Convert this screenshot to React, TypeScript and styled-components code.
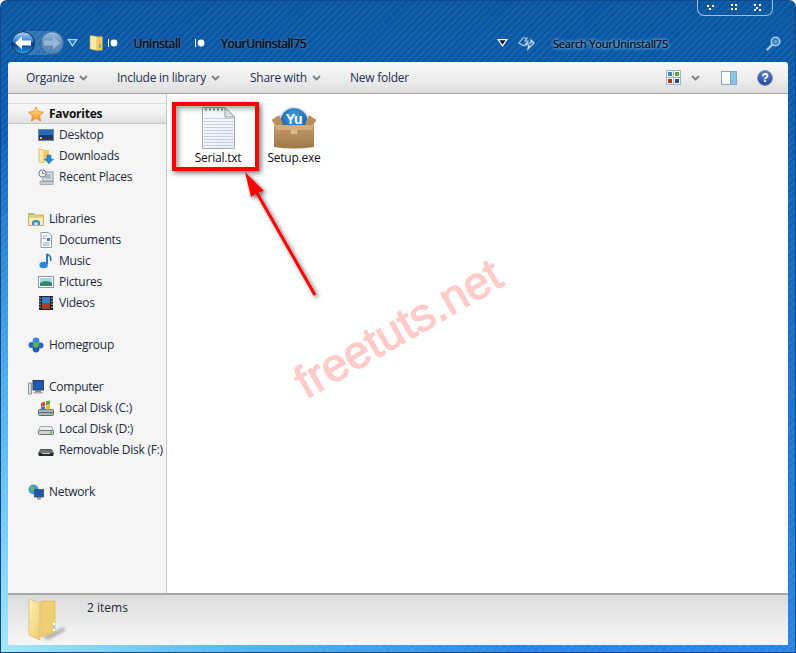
import styled, { createGlobalStyle } from 'styled-components';
import type { ReactNode } from 'react';

const GlobalStyle = createGlobalStyle`
  html, body {
    margin: 0;
    padding: 0;
    background: #fff;
  }
  body {
    font-family: "Open Sans", "Noto Sans", "Liberation Sans", sans-serif;
    font-size: 12px;
    letter-spacing: -0.25px;
    color: #1e2a3c;
  }
`;

const Window = styled.div`
  position: relative;
  width: 796px;
  height: 653px;
  box-sizing: border-box;
  display: flex;
  flex-direction: column;
  padding: 0 8px 8px;
  overflow: hidden;
  border-radius: 7px 7px 0 0;
  box-shadow: inset 0 0 0 1px #0c4a8c;
  background:
    repeating-linear-gradient(135deg, rgba(255, 255, 255, 0.06) 0 2px, rgba(255, 255, 255, 0) 2px 5px),
    radial-gradient(circle at 0% 100%, #a2e8fa 0, #58b8f0 220px, rgba(42, 132, 230, 0) 520px),
    linear-gradient(180deg, #09559f 0, #0a5cb0 110px, #2a84e4 100%);
`;

const WindowControls = styled.div`
  position: absolute;
  top: 0;
  right: 23px;
  width: 76px;
  height: 16px;
  box-sizing: border-box;
  display: flex;
  align-items: center;
  justify-content: space-between;
  padding: 0 11px 1px 9px;
  border: 1px solid #9cc0e2;
  border-top: 0;
  border-radius: 0 0 7px 7px;
`;

const TitleArea = styled.div`
  height: 62px;
  box-sizing: border-box;
  padding-top: 31px;
  display: flex;
  align-items: flex-start;
`;

const NavCluster = styled.div`
  display: flex;
  align-items: center;
  height: 24px;
  margin-left: 3px;
  gap: 3px;
`;

const ButtonPair = styled.div`
  display: flex;
  gap: 5px;
  border-radius: 12px;
  background: rgba(120, 170, 215, 0.35);
`;

const Crumbs = styled.div`
  display: flex;
  align-items: center;
  height: 24px;
  margin-left: 11px;
`;

const CrumbSpacer = styled.span`
  width: 5px;
`;

const CrumbText = styled.span`
  color: #000c1e;
  font-size: 12px;
  text-shadow: 0 0 1px #000c1e, 0 0 3px #4f7ca8, 0 0 3px #4f7ca8, 0 0 2px #4f7ca8;
  margin: 0 15px 0 15.5px;
`;

const SearchCluster = styled.div`
  display: flex;
  align-items: center;
  height: 24px;
  margin-left: auto;
  width: 291px;
`;

const RefreshSlot = styled.span`
  display: flex;
  margin-left: 10px;
`;

const SearchLabel = styled.span`
  color: #000c1e;
  font-size: 11px;
  letter-spacing: -0.2px;
  margin-left: 18px;
  text-shadow: 0 0 1px #000c1e, 0 0 4px #8fc4ec, 0 0 3px #8fc4ec, 0 0 2px #8fc4ec;
`;

const SearchGlass = styled.span`
  display: flex;
  margin-left: auto;
  margin-right: 7px;
`;

const Toolbar = styled.div`
  height: 32px;
  box-sizing: border-box;
  flex: none;
  display: flex;
  align-items: center;
  padding-left: 18px;
  border-radius: 3px 3px 0 0;
  border-bottom: 1px solid #a4a4a4;
  background: linear-gradient(180deg, #f8f8f8 0, #f1f1f1 40%, #dedede 100%);
`;

const ToolButton = styled.div<{ $width: number }>`
  width: ${(p) => p.$width}px;
  display: flex;
  align-items: center;
  gap: 5px;
  color: #1e3050;
`;

const ToolIcons = styled.div`
  margin-left: auto;
  margin-right: 15px;
  display: flex;
  align-items: center;
`;

const ToolIconSlot = styled.span<{ $gap: number }>`
  display: flex;
  margin-left: ${(p) => p.$gap}px;
`;

const Body = styled.div`
  flex: 1;
  min-height: 0;
  display: flex;
`;

const NavPane = styled.nav`
  width: 159px;
  box-sizing: border-box;
  flex: none;
  padding-top: 9px;
  background: #f5f5f5;
  border-right: 1px solid #c6c6c6;
`;

const NavGroup = styled.div`
  margin-bottom: 21px;
`;

const NavRow = styled.div<{ $child?: boolean; $active?: boolean }>`
  height: 21px;
  display: flex;
  align-items: center;
  gap: 5px;
  white-space: nowrap;
  padding-left: ${(p) => (p.$child ? 30 : 20)}px;
  font-weight: ${(p) => (p.$active ? 700 : 400)};
  color: ${(p) => (p.$active ? '#101010' : '#1e2a3c')};
  ${(p) =>
    p.$active &&
    `background: linear-gradient(180deg, #f8f8f8 0, #f0f0f0 50%, #e0e0e0 100%);
     border-top: 1px solid #dcdcdc;
     border-bottom: 1px solid #c8c8c8;
     height: 19px;`}
`;

const Main = styled.main`
  flex: 1;
  background: #fff;
  display: flex;
  align-items: flex-start;
  padding: 13px 0 0 13px;
`;

const FileTile = styled.div`
  width: 76px;
  display: flex;
  flex-direction: column;
  align-items: center;
  line-height: 16px;
  color: #101010;
`;

const StatusBar = styled.footer`
  height: 52px;
  box-sizing: border-box;
  flex: none;
  display: flex;
  align-items: flex-start;
  gap: 21px;
  padding: 2px 0 0 20px;
  border-top: 2px solid #a8a8a8;
  background: linear-gradient(180deg, #dcdcdc 0, #f0f0f0 70%, #f6f6f6 100%);
`;

const StatusText = styled.span`
  font-size: 12px;
  line-height: 18px;
  letter-spacing: 0;
  margin-top: 2px;
  color: #1e2a3c;
`;

const HighlightBox = styled.div`
  position: absolute;
  left: 172px;
  top: 102px;
  width: 87px;
  height: 69px;
  box-sizing: border-box;
  border: 4px solid #fe0000;
  box-shadow: 2px 2px 5px rgba(0, 0, 0, 0.55), inset 3px 3px 5px rgba(0, 0, 0, 0.35);
`;

const ArrowLayer = styled.svg`
  position: absolute;
  left: 236px;
  top: 165px;
  overflow: visible;
`;

const Watermark = styled.div`
  position: absolute;
  left: 278px;
  top: 298px;
  width: 240px;
  text-align: center;
  color: #ffcbcb;
  -webkit-text-stroke: 1.2px #ffcbcb;
  font-family: "Liberation Sans", sans-serif;
  font-size: 46px;
  letter-spacing: 0;
  line-height: 60px;
  transform: rotate(-30deg);
  white-space: nowrap;
`;

const Svg = ({ size = 16, h, children }: { size?: number; h?: number; children: ReactNode }) => (
  <svg width={size} height={h ?? size} viewBox={`0 0 ${size} ${h ?? size}`} style={{ flex: 'none', display: 'block' }}>
    {children}
  </svg>
);

const Caret = ({ color = '#7c7c7c' }: { color?: string }) => (
  <Svg size={9} h={6}>
    <path d="M1 1 L4.5 4.5 L8 1" fill="none" stroke={color} strokeWidth="1.8" />
  </Svg>
);

const TriangleDown = ({ outer, inner }: { outer: string; inner: string }) => (
  <Svg size={11} h={8}>
    <path d="M0 0 H11 L5.5 8 Z" fill={outer} />
    <path d="M2.4 1.3 H8.6 L5.5 5.8 Z" fill={inner} />
  </Svg>
);

const CrumbDot = () => (
  <Svg size={10} h={10}>
    <rect x="0" y="1" width="1" height="8" fill="#fff" />
    <circle cx="6" cy="5" r="3.4" fill="#fff" />
  </Svg>
);

const NavButton = ({ active, id }: { active?: boolean; id: string }) => (
  <Svg size={24} h={24}>
    <defs>
      <linearGradient id={id} x1="0" y1="0" x2="0" y2="1">
        {active ? (
          <>
            <stop offset="0" stopColor="#a8d4f8" />
            <stop offset="0.46" stopColor="#2c78d0" />
            <stop offset="0.52" stopColor="#06358c" />
            <stop offset="1" stopColor="#1fa8ec" />
          </>
        ) : (
          <>
            <stop offset="0" stopColor="#9cc0e0" />
            <stop offset="0.5" stopColor="#5f90c0" />
            <stop offset="1" stopColor="#4f86bc" />
          </>
        )}
      </linearGradient>
    </defs>
    <circle cx="12" cy="12" r="11.3" fill={`url(#${id})`} stroke={active ? '#0c2444' : '#3c5f88'} strokeWidth="1" />
    {active ? (
      <path d="M4 12 L11 5.5 V9.5 H20 V14.5 H11 V18.5 Z" fill="#fff" />
    ) : (
      <path d="M20 12 L13 5.5 V9.5 H4 V14.5 H13 V18.5 Z" fill="#9ab8d6" />
    )}
  </Svg>
);

const FolderPlain = () => (
  <Svg size={14} h={16}>
    <path d="M1 0.5 L8 1.5 V15.5 L1 14 Z" fill="#fbe9a8" stroke="#c8a850" strokeWidth="0.6" />
    <path d="M8 1.5 H13.5 V15.5 H8 Z" fill="#f0c860" />
    <path d="M11 9 V13" stroke="#3a90d8" strokeWidth="1" />
  </Svg>
);

const RefreshIcon = () => (
  <Svg size={17} h={15}>
    <path d="M1 7 L5 2 H9 L7 5 H10 L6 10 Z" fill="none" stroke="#a8cce8" strokeWidth="1.2" />
    <path d="M8 9 H11 L10 13 L16 7 L13 4 L13 7 H9 Z" fill="none" stroke="#c8e0f2" strokeWidth="1.2" />
  </Svg>
);

const SearchIcon = () => (
  <Svg size={15} h={15}>
    <circle cx="9.5" cy="5.5" r="4.2" fill="#3a7fc0" stroke="#a8d0ee" strokeWidth="1.6" />
    <circle cx="9.5" cy="5.5" r="1.6" fill="#6aa8d8" />
    <path d="M6.3 8.7 L1.5 13.5" stroke="#a8d0ee" strokeWidth="2.2" strokeLinecap="round" />
  </Svg>
);

const WinGlyph = ({ points }: { points: [number, number][] }) => (
  <Svg size={7} h={7}>
    {points.map(([x, y]) => (
      <rect key={`${x}-${y}`} x={x} y={y} width="2" height="2" fill="#fff" />
    ))}
  </Svg>
);

const ViewsIcon = () => (
  <Svg size={15} h={15}>
    <rect x="0.5" y="0.5" width="14" height="14" fill="#fff" stroke="#9cb4cc" />
    <path d="M7.5 0.5 V14.5 M0.5 7.5 H14.5" stroke="#9cb4cc" />
    <rect x="2" y="2" width="4" height="4" fill="#3c88c0" />
    <rect x="9" y="2" width="4" height="4" fill="#5aa838" />
    <rect x="2" y="9" width="4" height="4" fill="#b83018" />
    <rect x="9" y="9" width="4" height="4" fill="#2c4c80" />
  </Svg>
);

const PreviewIcon = () => (
  <Svg size={16} h={14}>
    <rect x="0.5" y="0.5" width="15" height="13" fill="#fff" stroke="#88a4c0" />
    <rect x="10" y="1" width="5" height="12" fill="#88c4e4" />
    <path d="M9.5 1 V13" stroke="#88a4c0" />
  </Svg>
);

const HelpIcon = () => (
  <Svg size={16} h={16}>
    <defs>
      <radialGradient id="helpFill" cx="0.5" cy="0.3" r="0.7">
        <stop offset="0" stopColor="#6c94d8" />
        <stop offset="1" stopColor="#1c3c98" />
      </radialGradient>
    </defs>
    <circle cx="8" cy="8" r="7.4" fill="url(#helpFill)" stroke="#7c8ca8" strokeWidth="1" />
    <text x="8" y="12.3" textAnchor="middle" fontFamily="Liberation Sans" fontWeight="700" fontSize="12" fill="#fff">
      ?
    </text>
  </Svg>
);

const StarIcon = () => (
  <Svg size={16} h={16}>
    <defs>
      <linearGradient id="starFill" x1="0" y1="0" x2="0" y2="1">
        <stop offset="0" stopColor="#fff0a0" />
        <stop offset="1" stopColor="#f59020" />
      </linearGradient>
    </defs>
    <path
      d="M8 0.8 L10.2 5.6 L15.4 6.2 L11.5 9.7 L12.6 15 L8 12.3 L3.4 15 L4.5 9.7 L0.6 6.2 L5.8 5.6 Z"
      fill="url(#starFill)"
      stroke="#e88820"
      strokeWidth="0.8"
    />
  </Svg>
);

const DesktopIcon = () => (
  <Svg>
    <rect x="0.5" y="2.5" width="15" height="11" fill="#16386c" stroke="#7088a8" />
    <rect x="1" y="3" width="14" height="5" fill="#2468b8" />
    <rect x="1" y="11" width="14" height="2" fill="#303c4c" />
    <rect x="2" y="10" width="2" height="2" fill="#e8c048" />
  </Svg>
);

const DownloadsIcon = () => (
  <Svg>
    <path d="M1 1 L6 2 V15 L1 14 Z" fill="#fbe9a8" stroke="#c8a850" strokeWidth="0.6" />
    <path d="M6 2 H11 V13 H6 Z" fill="#f0c860" />
    <path d="M9 7 H13 V11 H15.5 L11 15.8 L6.5 11 H9 Z" fill="#2a88d8" stroke="#1c60a8" strokeWidth="0.5" />
  </Svg>
);

const RecentIcon = () => (
  <Svg>
    <rect x="5" y="3" width="10" height="9" fill="#e0e4e8" stroke="#8c949c" />
    <rect x="7" y="5" width="6" height="5" fill="#a8b8c4" />
    <rect x="2" y="12.5" width="13" height="3" fill="#c8ccd0" stroke="#888" strokeWidth="0.6" />
    <circle cx="4.5" cy="4.5" r="3.6" fill="#f0f0f0" stroke="#70787c" />
    <path d="M4.5 2.5 V4.5 H6.5" stroke="#505860" fill="none" strokeWidth="0.8" />
  </Svg>
);

const LibrariesIcon = () => (
  <Svg>
    <path d="M0.5 2.5 H6 L7.5 4 H15.5 V14.5 H0.5 Z" fill="#e8d080" stroke="#b89c48" strokeWidth="0.7" />
    <rect x="1" y="2" width="5" height="2" fill="#9cc868" />
    <path d="M1 7 H15 V14 H1 Z" fill="#fcefb8" />
    <path d="M4 14 V10.5 Q8 7 12 10.5 V14 H9.5 V11.5 H6.5 V14 Z" fill="#3c94d0" />
  </Svg>
);

const DocumentsIcon = () => (
  <Svg>
    <path d="M3 0.5 H10.5 L13.5 3.5 V15.5 H3 Z" fill="#fff" stroke="#8c9cb0" />
    <path d="M5 4 H9 M5 6.5 H8 M5 11 H11.5 M5 13 H11.5" stroke="#8ca4c0" />
    <rect x="9" y="6" width="3" height="3" fill="#3c80b8" />
  </Svg>
);

const MusicIcon = () => (
  <Svg>
    <path d="M9 1 V11" stroke="#2a78c8" strokeWidth="2" />
    <path d="M9 1 Q14 3 12.5 8" fill="none" stroke="#2a78c8" strokeWidth="1.6" />
    <ellipse cx="5.6" cy="12" rx="4.2" ry="3.2" fill="#2a88d8" />
  </Svg>
);

const PicturesIcon = () => (
  <Svg>
    <rect x="0.5" y="2.5" width="15" height="11" fill="#fff" stroke="#8c98a4" />
    <rect x="2" y="4" width="12" height="5" fill="#a8d4e8" />
    <path d="M2 9 Q8 5 14 9 V12 H2 Z" fill="#2c8c60" />
  </Svg>
);

const VideosIcon = () => (
  <Svg>
    <rect x="1" y="1" width="14" height="14" fill="#20242a" />
    <rect x="4" y="2" width="8" height="12" fill="#2a88c8" />
    <path d="M4 8 H12 V14 H4 Z" fill="#a84028" />
    <path d="M2 2.5 V13.5 M14 2.5 V13.5" stroke="#dde" strokeWidth="1" strokeDasharray="1.5 1.5" />
  </Svg>
);

const HomegroupIcon = () => (
  <Svg>
    <circle cx="3.5" cy="8" r="3" fill="#2a68c0" />
    <circle cx="12.5" cy="8.5" r="3" fill="#2a68c0" />
    <circle cx="8" cy="4" r="3.4" fill="#3c88d8" />
    <circle cx="8" cy="12" r="3.4" fill="#2458a8" />
    <circle cx="8" cy="8" r="2.8" fill="#58b848" />
  </Svg>
);

const ComputerIcon = () => (
  <Svg>
    <rect x="0.5" y="4" width="3" height="11" fill="#d8dcdc" stroke="#6c7478" strokeWidth="0.7" />
    <rect x="5" y="1.5" width="10.5" height="9.5" fill="#1c58b8" stroke="#303c50" />
    <rect x="7" y="11" width="6" height="2" fill="#80888c" />
    <rect x="5.5" y="13" width="9" height="1.5" fill="#a8b0b4" />
  </Svg>
);

const DiskCIcon = () => (
  <Svg>
    <rect x="0.5" y="9.5" width="15" height="6" rx="1" fill="#a8b8b8" stroke="#606c70" />
    <path d="M1 12.5 H15" stroke="#5c6c70" />
    <rect x="12" y="13.5" width="2" height="1" fill="#48d040" />
    <path d="M3 3 L7 1.5 V5.5 L3 7 Z" fill="#d84828" />
    <path d="M8 1.2 L12 0.5 V4.5 L8 5.2 Z" fill="#58a838" />
    <path d="M3 7.5 L7 6 V9.5 L3 9.5 Z" fill="#2878c8" />
    <path d="M8 5.8 L12 5 V9.5 H8 Z" fill="#f0b820" />
  </Svg>
);

const DiskDIcon = () => (
  <Svg>
    <path d="M2.5 5.5 H13.5 L15.5 9.5 H0.5 Z" fill="#eceeee" stroke="#8c9498" strokeWidth="0.8" />
    <rect x="0.5" y="9.5" width="15" height="4" rx="1" fill="#d0d4d4" stroke="#6c7478" />
    <rect x="12" y="10.5" width="2" height="2" fill="#58c848" />
  </Svg>
);

const DiskFIcon = () => (
  <Svg>
    <path d="M2.5 7.5 H13.5 L15.5 11.5 H0.5 Z" fill="#70767a" stroke="#404448" strokeWidth="0.8" />
    <rect x="0.5" y="11" width="15" height="3" rx="1" fill="#282a2e" />
    <rect x="4" y="11" width="8" height="1" fill="#c8cccc" />
  </Svg>
);

const NetworkIcon = () => (
  <Svg>
    <circle cx="5.5" cy="5.5" r="5" fill="#3ca0d8" />
    <path d="M2 3 Q5 1 6 3 T4 8 Z" fill="#68b848" />
    <rect x="6.5" y="5.5" width="9" height="7.5" fill="#1c58b0" stroke="#404c60" strokeWidth="0.8" />
    <rect x="9" y="13" width="4" height="2.5" fill="#8c9498" />
  </Svg>
);

const TextFileIcon = () => {
  const lines = [];
  for (let y = 11; y < 39; y += 3) {
    lines.push(<path key={y} d={`M2 ${y + 0.5} H31`} stroke="#c4d0e4" />);
  }
  return (
    <Svg size={33} h={43}>
      <defs>
        <linearGradient id="paperFill" x1="0" y1="0" x2="1" y2="1">
          <stop offset="0" stopColor="#fbfcfe" />
          <stop offset="1" stopColor="#e8ecf4" />
        </linearGradient>
      </defs>
      <path d="M0.5 0.5 H23 L32.5 10 V41.5 H0.5 Z" fill="url(#paperFill)" stroke="#a8a8a8" />
      {lines}
      <path d="M23 0.5 V10 H32.5 Z" fill="#e0e4ea" stroke="#a0a0a0" />
      <path d="M3 2.5 H21" stroke="#909090" strokeWidth="2" strokeDasharray="2 2" />
    </Svg>
  );
};

const SetupBoxIcon = () => (
  <Svg size={46} h={43}>
    <defs>
      <linearGradient id="boxFill" x1="0" y1="0" x2="0" y2="1">
        <stop offset="0" stopColor="#c49a68" />
        <stop offset="1" stopColor="#a07848" />
      </linearGradient>
      <radialGradient id="orbFill" cx="0.5" cy="0.3" r="0.7">
        <stop offset="0" stopColor="#48a0e0" />
        <stop offset="1" stopColor="#0c4c98" />
      </radialGradient>
    </defs>
    <circle cx="23" cy="15" r="14.5" fill="url(#orbFill)" stroke="#d8dee4" strokeWidth="1.6" />
    <text x="23" y="17" textAnchor="middle" fontFamily="Liberation Sans" fontWeight="700" fontSize="14" fill="#fff">
      Yu
    </text>
    <path d="M0.5 13 L8 8 L12 17 L6 21 Z" fill="#b89060" />
    <path d="M45.5 13 L38 8 L34 17 L40 21 Z" fill="#b89060" />
    <path d="M3 18 H43 V40 Q23 43 3 40 Z" fill="url(#boxFill)" />
    <path d="M3 18 H43 L40 23 H6 Z" fill="#d4ac7c" />
    <path d="M20 23 H26 V27 H20 Z" fill="#d8bc94" />
  </Svg>
);

const BigFolderIcon = () => (
  <Svg size={38} h={44}>
    <defs>
      <linearGradient id="bigFolder" x1="0" y1="0" x2="1" y2="1">
        <stop offset="0" stopColor="#fff2b8" />
        <stop offset="1" stopColor="#f0cc68" />
      </linearGradient>
      <filter id="folderShade">
        <feGaussianBlur stdDeviation="1.6" />
      </filter>
    </defs>
    <path d="M14 40 L36 30 L37 34 L20 43 Z" fill="#808080" opacity="0.55" filter="url(#folderShade)" />
    <path d="M13 4 H27 V35 L13 40 Z" fill="#f0cf70" stroke="#d8b450" strokeWidth="0.6" />
    <path d="M1 2 L12 6 V43 L1 38 Z" fill="url(#bigFolder)" stroke="#d0b060" strokeWidth="0.6" />
    <path d="M26 26 V34" stroke="#fff" strokeWidth="2" />
    <path d="M26 28 V32" stroke="#4ca0e0" strokeWidth="1" />
  </Svg>
);

const favorites = [
  { label: 'Desktop', icon: <DesktopIcon /> },
  { label: 'Downloads', icon: <DownloadsIcon /> },
  { label: 'Recent Places', icon: <RecentIcon /> },
];

const libraries = [
  { label: 'Documents', icon: <DocumentsIcon /> },
  { label: 'Music', icon: <MusicIcon /> },
  { label: 'Pictures', icon: <PicturesIcon /> },
  { label: 'Videos', icon: <VideosIcon /> },
];

const drives = [
  { label: 'Local Disk (C:)', icon: <DiskCIcon /> },
  { label: 'Local Disk (D:)', icon: <DiskDIcon /> },
  { label: 'Removable Disk (F:)', icon: <DiskFIcon /> },
];

const renderChildren = (items: { label: string; icon: ReactNode }[]) =>
  items.map((item) => (
    <NavRow $child key={item.label}>
      {item.icon}
      {item.label}
    </NavRow>
  ));

const App = () => {
  return (
    <Window>
      <GlobalStyle />
      <WindowControls>
        <WinGlyph points={[[0, 1], [5, 1], [2, 4]]} />
        <WinGlyph points={[[0, 0], [4, 0], [0, 4], [4, 4]]} />
        <WinGlyph points={[[0, 0], [5, 0], [2, 3], [0, 5], [5, 5]]} />
      </WindowControls>

      <TitleArea>
        <NavCluster>
          <ButtonPair>
            <NavButton active id="backFill" />
            <NavButton id="forwardFill" />
          </ButtonPair>
          <TriangleDown outer="#a8d8f0" inner="#1c78b8" />
        </NavCluster>
        <Crumbs>
          <FolderPlain />
          <CrumbSpacer />
          <CrumbDot />
          <CrumbText>Uninstall</CrumbText>
          <CrumbDot />
          <CrumbText>YourUninstall75</CrumbText>
        </Crumbs>
        <SearchCluster>
          <TriangleDown outer="#fff" inner="#0a1440" />
          <RefreshSlot>
            <RefreshIcon />
          </RefreshSlot>
          <SearchLabel>Search YourUninstall75</SearchLabel>
          <SearchGlass>
            <SearchIcon />
          </SearchGlass>
        </SearchCluster>
      </TitleArea>

      <Toolbar>
        <ToolButton $width={91}>Organize <Caret /></ToolButton>
        <ToolButton $width={133}>Include in library <Caret /></ToolButton>
        <ToolButton $width={100}>Share with <Caret /></ToolButton>
        <ToolButton $width={90}>New folder</ToolButton>
        <ToolIcons>
          <ToolIconSlot $gap={0}><ViewsIcon /></ToolIconSlot>
          <ToolIconSlot $gap={10}><Caret /></ToolIconSlot>
          <ToolIconSlot $gap={21}><PreviewIcon /></ToolIconSlot>
          <ToolIconSlot $gap={20}><HelpIcon /></ToolIconSlot>
        </ToolIcons>
      </Toolbar>

      <Body>
        <NavPane>
          <NavGroup>
            <NavRow $active>
              <StarIcon />
              Favorites
            </NavRow>
            {renderChildren(favorites)}
          </NavGroup>
          <NavGroup>
            <NavRow>
              <LibrariesIcon />
              Libraries
            </NavRow>
            {renderChildren(libraries)}
          </NavGroup>
          <NavGroup>
            <NavRow>
              <HomegroupIcon />
              Homegroup
            </NavRow>
          </NavGroup>
          <NavGroup>
            <NavRow>
              <ComputerIcon />
              Computer
            </NavRow>
            {renderChildren(drives)}
          </NavGroup>
          <NavGroup>
            <NavRow>
              <NetworkIcon />
              Network
            </NavRow>
          </NavGroup>
        </NavPane>
        <Main>
          <FileTile>
            <TextFileIcon />
            Serial.txt
          </FileTile>
          <FileTile>
            <SetupBoxIcon />
            Setup.exe
          </FileTile>
        </Main>
      </Body>

      <StatusBar>
        <BigFolderIcon />
        <StatusText>2 items</StatusText>
      </StatusBar>

      <HighlightBox />
      <ArrowLayer width="90" height="140" viewBox="0 0 90 140">
        <defs>
          <filter id="arrowShadow" x="-30%" y="-30%" width="160%" height="160%">
            <feDropShadow dx="2" dy="2" stdDeviation="2" floodColor="#000" floodOpacity="0.6" />
          </filter>
        </defs>
        <g filter="url(#arrowShadow)">
          <path d="M79 130 L21 28" stroke="#fe0000" strokeWidth="3" fill="none" />
          <path d="M9 7 L15 32 L21 28 L28 26 Z" fill="#fe0000" />
        </g>
      </ArrowLayer>
      <Watermark>freetuts.net</Watermark>
    </Window>
  );
};

export default App;
